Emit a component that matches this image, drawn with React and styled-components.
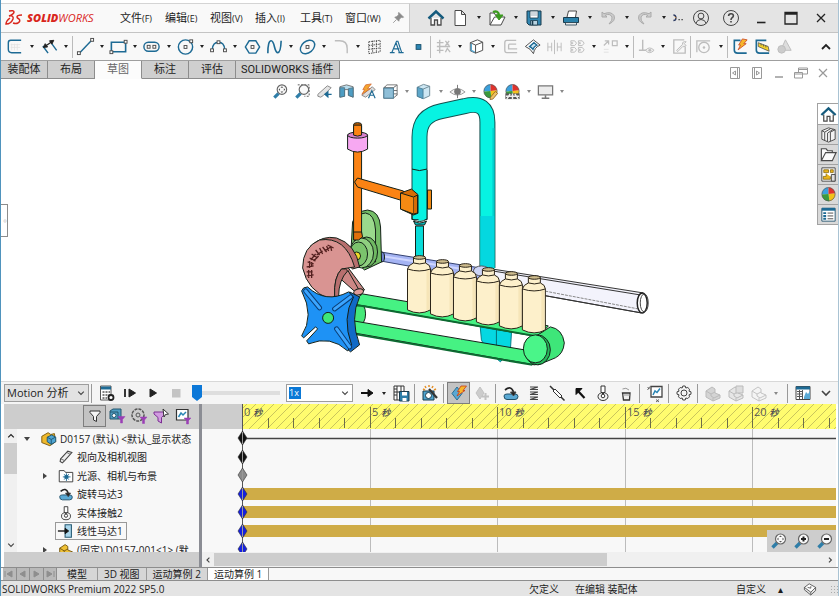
import React from 'react'
import styled, { createGlobalStyle, css } from 'styled-components'

const GlobalStyle = createGlobalStyle`
  * {
    box-sizing: border-box;
  }
  body {
    margin: 0;
    background: #fff;
    color: #1c1c1c;
    font-family: 'Open Sans', 'Noto Sans CJK SC', sans-serif;
    font-size: 11px;
    line-height: 16px;
  }
  button, input, select {
    font: inherit;
    color: inherit;
    margin: 0;
    padding: 0;
    border: none;
    background: none;
  }
`

const Window = styled.div`
  display: flex;
  flex-direction: column;
  min-height: 100vh;
  overflow: hidden;
  border-left: 1px solid #4f93bd;
  border-right: 1px solid #a9c3d3;
  white-space: nowrap;
`

/* ---------- icons ---------- */

const B = '#1d6a94'
const G = '#bdbdbd'
const D = '#4a4a4a'

const dot = (x, y, c = D) => (
  <rect x={x - 1.5} y={y - 1.5} width="3" height="3" fill="#fff" stroke={c} strokeWidth="1" />
)
const ball = (
  <g stroke="none">
    <path d="M10 9.500V2.500A7 7 0 0 0 3 10Z" fill="#3aa0dc" />
    <path d="M10 9.500V2.500A7 7 0 0 1 17 9Z" fill="#e0322c" />
    <path d="M10 9.500L17 9A7 7 0 0 1 11 17Z" fill="#f2c21b" />
    <path d="M10 9.500L11 17A7 7 0 0 1 3 10Z" fill="#3a9a3c" />
    <circle cx="10" cy="9.700" r="7" fill="none" stroke="#555" strokeWidth=".7" />
  </g>
)
const lens = (
  <>
    <path d="M8 12L3.500 16.500" stroke="#2f7ea8" strokeWidth="3.400" />
    <circle cx="11.500" cy="8" r="5" fill="#fafafa" stroke="#666" strokeWidth="1.200" />
  </>
)
const part = (c, c2) => (
  <>
    <path d="M3 8L9 4L12 6V10L17 12V15L10 18L3 14Z" fill={c} stroke={c2} />
    <path d="M3 8L8 11V13L11 15L17 12M8 11L12 9M10 18V15" stroke={c2} />
  </>
)

const icons = {
  home: (
    <>
      <path d="M5 10V17H8.500V12H11.500V17H15V10" fill="#fff" stroke={D} strokeWidth="1.300" />
      <path d="M2.500 10.500L10 3.500L17.500 10.500" stroke="#155b7d" strokeWidth="2.400" />
    </>
  ),
  doc: <path d="M5 2.500H11.500L15.500 6.500V17.500H5ZM11.500 2.500V6.500H15.500" fill="#fff" stroke={D} />,
  open: (
    <>
      <path d="M3 17V5H7L8.500 7H11M3 17L7.500 9H18L14 17Z" fill="#fff" stroke={D} />
      <path d="M6 4Q11 2 12 7" stroke="#3b9a1e" strokeWidth="2.400" />
      <path d="M8.500 7H16L12 12Z" fill="#3b9a1e" stroke="#3b9a1e" />
    </>
  ),
  save: (
    <>
      <path d="M3 3H17V17H5L3 15Z" fill="#3186b1" stroke="#193b4d" />
      <path d="M6 3H14V10H6Z" fill="#fff" stroke="#193b4d" strokeWidth=".8" />
      <path d="M7 5H13M7 7H13" stroke="#89a" strokeWidth=".8" />
      <path d="M6.500 12.500H13.500V17H6.500Z" fill="#b9d3e0" stroke="#193b4d" strokeWidth=".8" />
      <path d="M8.500 13V17" stroke="#193b4d" strokeWidth="1.600" />
    </>
  ),
  print: (
    <>
      <path d="M6 9L7.500 3H15.500L14.500 9" fill="#fff" stroke={D} />
      <path d="M2.500 9.500H17.500V14.500H2.500Z" fill="#2b82ab" stroke="#193b4d" />
      <path d="M4.500 14.500H15.500V17H4.500Z" fill="#e9e9e9" stroke="#193b4d" strokeWidth=".8" />
    </>
  ),
  undo: <path d="M4 4V9H9L7.300 7.300Q12 5 14 9Q15 12 11 16Q18 13 16 7.500Q13 3 6 5.700Z" fill="#ccc" stroke="#aaa" />,
  redo: <path d="M16 4V9H11L12.700 7.300Q8 5 6 9Q5 12 9 16Q2 13 4 7.500Q7 3 14 5.700Z" fill="#ccc" stroke="#aaa" />,
  more: (
    <>
      <path d="M4 7Q7 7 7 10.500Q7 13.500 4 13.500" stroke="#2d3c63" strokeWidth="1.600" />
      <path d="M5.500 9L7.500 11" stroke="#e7902b" />
      <path d="M10 12.500H11.500M13.500 12.500H15" stroke="#333" strokeWidth="1.400" />
    </>
  ),
  user: (
    <>
      <circle cx="10" cy="10" r="7.500" />
      <circle cx="10" cy="8" r="2.900" />
      <path d="M4.800 15.500Q6 11.500 10 11.500Q14 11.500 15.200 15.500" />
    </>
  ),
  help: (
    <>
      <circle cx="10" cy="10" r="7.500" />
      <path d="M7.600 8Q7.600 5.700 10 5.700Q12.400 5.700 12.400 7.800Q12.400 9 11 9.800Q10 10.500 10 12M10 13V14.600" strokeWidth="1.600" />
    </>
  ),
  min: <path d="M6 14.500H14.500" stroke="#222" strokeWidth="1.600" />,
  max: <path d="M4 4.500H16V16H4ZM4 6H16" stroke="#222" strokeWidth="1.300" />,
  close: <path d="M6 6L14 14M14 6L6 14" stroke="#222" strokeWidth="1.300" />,
  pin: <path d="M11 3L17 9L15.500 9.500L14 9L11.500 12L11 14L6 9L8 8.500L11 6L10.500 4.500ZM8 12L4 16" fill="#8a8a8a" stroke="#8a8a8a" />,
  sketch: (
    <>
      <path d="M7 7V14M10 7V14M13 7V14M6 8H16M6 11H16" stroke="#e2e2e2" strokeWidth=".8" />
      <path d="M17 3.500H6Q3.500 3.500 3.500 6V13Q3.500 16.500 7 16.500H17" stroke={B} strokeWidth="1.500" />
    </>
  ),
  dim: (
    <>
      <path d="M3 9.500L8.500 17M12 6.500L17.500 14" stroke={B} strokeWidth="1.500" />
      <path d="M5 10L12.500 5" stroke="#222" strokeWidth="1.500" />
      <path d="M3.500 11L8 10.500L5.500 7ZM14.500 3.500L10 4L12.500 7.500Z" fill="#222" stroke="#222" />
    </>
  ),
  line: <><path d="M4 16.500L16 4" stroke={B} strokeWidth="1.500" />{dot(3, 17)}{dot(17, 3)}</>,
  rect: <><path d="M2.500 5.500H17.500V15.500H2.500Z" stroke={B} strokeWidth="1.700" />{dot(17.500, 5)}{dot(2.500, 16)}</>,
  slot: <><rect x="2" y="5.500" width="16" height="9.500" rx="4.700" stroke={B} strokeWidth="1.500" />{dot(7, 10.300)}{dot(13, 10.300)}</>,
  circle: <><circle cx="10" cy="10.500" r="7.500" stroke={B} strokeWidth="1.500" />{dot(10, 10.500)}{dot(16, 4.500)}</>,
  arc: <><path d="M3.500 13Q4 5.500 10 5.500Q16 5.500 16.500 13" stroke={B} strokeWidth="1.500" />{dot(10, 5.500)}{dot(3.200, 14)}{dot(16.800, 14)}</>,
  hexagon: <><path d="M6.500 4H13.500L17.500 10.500L13.500 17H6.500L2.500 10.500Z" stroke={B} strokeWidth="1.500" />{dot(10, 10.500)}</>,
  spline: <path d="M3 17Q3 4 6.500 4Q8.500 4 10 10.500Q11.500 16.500 13.500 16.500Q16.500 16.500 17 4" stroke={B} strokeWidth="1.700" />,
  ellipse: <><ellipse cx="10" cy="10.500" rx="8.500" ry="6" transform="rotate(-40 10 10.500)" stroke={B} strokeWidth="1.500" />{dot(10, 10.500)}</>,
  fillet: <path d="M3 4H8M8 4Q16 4 16 12V17" stroke={G} strokeWidth="1.500" />,
  plane: <path d="M4 5L16 3.500V15.500L4 17.500ZM8 4V17M12 4V16M4 9L16 7.500M4 13L16 11.500" stroke="#444" strokeDasharray="1.500 1" />,
  text: <path d="M3 16.500H8M12 16.500H17.500M5 16.500L10 4.500H11.500L15.500 16.500M7.500 12.500H13M9.500 6L13 16" stroke={B} strokeWidth="1.200" />,
  point: <rect x="7.500" y="8" width="5" height="5" fill="#2c86b4" stroke="#164f6c" />,
  trim: <path d="M3 6H10M3 10H17M3 14H10M6 3V17M12 4L16 9M16 4L12 9M12 16L14 12L17 16" stroke={G} strokeWidth="1.400" />,
  box: (
    <>
      <path d="M3.500 6L11 3L16.500 5.500V14L9 17L3.500 14.500Z" fill="#fff" stroke={D} />
      <path d="M3.500 6L9 8.500L16.500 5.500M9 8.500V17" stroke={D} />
      <path d="M4.500 7V14L8 16" stroke="#58a7d0" strokeWidth="1.500" />
    </>
  ),
  offset: <path d="M16 3.500H6Q4 3.500 4 6V14Q4 16.500 6 16.500H17M16 7.500H9Q8 7.500 8 9V12.500H17" stroke={G} strokeWidth="1.400" />,
  surface: (
    <>
      <path d="M2.500 10L11 3L18 8.500Q12 11 11 17.500Q8 12 2.500 10Z" stroke={D} fill="#fff" />
      <path d="M7 10L11.500 6L14.500 8.500Q11.500 10 10.500 13Q9 11 7 10Z" fill="#cfe7f4" stroke={B} strokeWidth="1.500" />
    </>
  ),
  mirror: <path d="M10 3V18M3 6V15M7 6V15M3 10.500H7M17 6V15M13 6V15M13 10.500H17" stroke={G} />,
  pattern: <path d="M3 4H7L9 6.500L7 9H3V7H5V6H3ZM11 4H15L17 6.500L15 9H11V7H13V6H11ZM3 11H7L9 13.500L7 16H3V14H5V13H3ZM11 11H15L17 13.500L15 16H11V14H13V13H11Z" stroke={G} />,
  move: <><path d="M3 9L8 4M4 4H8V8M12 4H17V9H12Z" stroke={G} strokeWidth="1.300" /><path d="M3 13H8M3 16H8" stroke="#e2e2e2" /></>,
  relation: <><path d="M6 3V14M2 14H10" stroke={G} strokeWidth="1.500" /><path d="M9 14Q13 9 18 14Q13 19 9 14Z" fill="#eee" stroke={G} /><circle cx="13.500" cy="14" r="1.500" fill={G} stroke="none" /></>,
  repair: <><path d="M15 3H4V17H16V10" stroke={G} strokeWidth="1.400" /><path d="M7 14L13 8Q13 4 17 5L15 7L17 9Q14 11 13.500 10L8 15.500Z" fill="#eee" stroke={G} /></>,
  snap: <><path d="M3 16V4H17" stroke={G} strokeWidth="1.400" /><circle cx="10.500" cy="11" r="5.500" stroke={G} strokeWidth="1.400" /><circle cx="10.500" cy="11" r="1.300" fill={G} stroke="none" /></>,
  rapid: (
    <>
      <path d="M10 3.500H3.500V14Q3.500 17 7 17H16.500" stroke={B} strokeWidth="1.700" />
      <path d="M12 2L17 3L13.500 7H16L7.500 13.500L10 8.500H8Z" fill="#f6b72c" stroke="#c63a1b" strokeWidth=".8" />
    </>
  ),
  instant: (
    <>
      <path d="M14 3.500H3.500V14Q3.500 17 7 17H17" stroke={B} strokeWidth="1.700" />
      <path d="M5.500 6L16 10L17 15L5.500 10Z" fill="#f3d12c" stroke={D} strokeWidth=".8" />
      <path d="M8.500 7V9M11 8V10M13.500 9V11" stroke={D} strokeWidth=".8" />
    </>
  ),
  shaded: <><path d="M11 3L17 14H6Z" fill="#ddd" stroke={G} /><circle cx="7" cy="13" r="4" fill="#ccc" stroke={G} /></>,
  up: <path d="M6 12L10 8L14 12" stroke="#222" strokeWidth="1.800" />,
  down: <path d="M6 8L10 12L14 8" stroke="#444" strokeWidth="1.600" />,
  left: <path d="M12 6.500L8.500 10L12 13.500" stroke="#444" strokeWidth="1.600" />,
  right: <path d="M8.500 6.500L12 10L8.500 13.500" stroke="#444" strokeWidth="1.600" />,
  dockLeft: <path d="M5.500 4.500H14.500V15.500H5.500ZM10.500 8L7.500 10L10.500 12ZM12.500 5V15" stroke="#999" />,
  dockRight: <path d="M5.500 4.500H14.500V15.500H5.500ZM9.500 8L12.500 10L9.500 12ZM7.500 5V15" stroke="#999" />,
  docMin: <path d="M6 14H14" stroke="#999" strokeWidth="1.500" />,
  restore: <path d="M3.500 9.500H11.500V15H3.500ZM7.500 9V5H16.500V11H12M7.500 6.500H16M4 11H11" stroke="#999" />,
  docClose: <path d="M6 6L14 14M14 6L6 14" stroke="#999" strokeWidth="1.200" />,
  zoomFit: <>{lens}<path d="M11.500 4.500L10 6H13ZM11.500 11.500L10 10H13ZM8 8L9.500 6.500V9.500ZM15 8L13.500 6.500V9.500Z" fill="#555" stroke="none" /></>,
  zoomArea: <><path d="M5 3H17V15H12" stroke="#555" strokeDasharray="2 1.500" />{lens}</>,
  zoomIn: <>{lens}<path d="M11.500 5.500V10.500M9 8H14" stroke="#222" strokeWidth="2" /></>,
  zoomOut: <>{lens}<path d="M9 8H14" stroke="#222" strokeWidth="2" /></>,
  prev: (
    <>
      <path d="M3 13L13 4L17 6L9 14L6 16L3 15Z" fill="#e4e4e4" stroke="#888" />
      <path d="M17.500 13H11M13.500 10.500L10.500 13L13.500 15.500Z" fill={B} stroke={B} strokeWidth="1.400" />
    </>
  ),
  section: (
    <>
      <path d="M3 5L10 3L17 5V16L12 14V8L8 8V15L3 16Z" fill="#b8dcec" stroke="#777" />
      <path d="M3 6H8V15L3 16ZM12 7L17 6V16L12 14Z" fill="#4e9dc3" stroke="#4b6c7c" strokeWidth=".8" />
    </>
  ),
  dynamic: (
    <>
      <path d="M3 14L14 5L17 8L7 16Z" fill="#ddd" stroke="#888" />
      <path d="M7 3L13 2L9 7H12L3 13L6 8H4Z" fill="#f4a62f" stroke="#cf5a26" strokeWidth=".7" />
      <path d="M10 17L13.500 9L17 17M11.500 14H16" stroke={B} strokeWidth="1.200" />
    </>
  ),
  orient: (
    <>
      <path d="M6 3H17V14" stroke="#777" />
      <path d="M3 6L6 3.500M3 6H13V17H3ZM13 6L16.500 3.500M13 17L17 13.500M13 9H17M13 12.500H17" fill="none" stroke="#666" />
      <rect x="3" y="6.500" width="10" height="10.500" fill="#8fbfd8" stroke="#4d7f99" />
    </>
  ),
  display: (
    <>
      <path d="M3.500 5.500L10 2.500L16.500 4.500V14.500L10 17.500L3.500 15Z" fill="#cde7f3" stroke="#6f8a97" />
      <path d="M3.500 5.500L9.500 7.500V17.500L3.500 15Z" fill="#5da6c9" stroke="#4a7f99" />
      <path d="M9.500 7.500L16.500 4.500" stroke="#6f8a97" />
    </>
  ),
  eye: (
    <>
      <path d="M2 10.500Q10 3.500 18 10.500Q10 17 2 10.500Z" fill="#f4f4f4" stroke="#999" />
      <circle cx="10" cy="10" r="3.500" fill="#777" stroke="none" />
      <path d="M10 3V17" stroke="#777" />
    </>
  ),
  appearance: <>{ball}<path d="M10 16L15 10L17.500 12L12.500 18L9.500 18.500Z" fill="#edc268" stroke="#8a5e1d" strokeWidth=".8" /></>,
  scene: <>{ball}<path d="M2.500 12H17.500V18H2.500Z" fill="#555" stroke="none" /><path d="M4 18L7.500 12.500M16 18L12.500 12.500M10 12V18M3 15H17" stroke="#eee" strokeWidth="1.500" /></>,
  monitor: <><path d="M2.500 4H17.500V13.500H2.500Z" fill="#ececec" stroke="#777" strokeWidth="1.300" /><path d="M10 14V16.500M6 17H14" stroke="#777" strokeWidth="1.600" /></>,
  library: <path d="M3 6L10 3L17 5V15L10 18L3 15ZM3 6L6 7.500M6 7.500V16.500M6 7.500L12 4M9 8.500V17.500M9 8.500L15 4.500M12 7.500V17M12 7.500L17 5" fill="#f3f3f3" stroke={D} />,
  folder: <path d="M2.500 16.500V4H7.500L9 6H14V8M2.500 16.500L7 8H18L14 16.500Z" fill="#fafafa" stroke={D} strokeWidth="1.200" />,
  palette: (
    <>
      <path d="M3 3H17V17H3Z" fill="#fff" stroke={D} />
      <path d="M5 5H10V8H5ZM12 5H15V8H12ZM7.500 9V12H4.500V15H12V12" fill="#eab61a" stroke="#81620b" strokeWidth=".8" />
      <path d="M13 10H17V17H13Z" fill="#ddd" stroke={D} />
    </>
  ),
  ball,
  props: (
    <>
      <path d="M3 3.500H17V17H3Z" fill="#fff" stroke="#2b5a73" />
      <path d="M3 4.500H17" stroke={B} strokeWidth="3" />
      <path d="M4.500 8.500H7.500M4.500 11.500H7.500M4.500 14.500H7.500" stroke={B} strokeWidth="2" />
      <path d="M9 8.500H15M9 11.500H15M9 14.500H15" stroke={D} />
    </>
  ),
  calc: (
    <>
      <path d="M3.500 3H14V17H3.500Z" fill="#fff" stroke="#555" />
      <path d="M4 5H14" stroke={B} strokeWidth="3" />
      <path d="M5.500 9H13M5.500 12H13M5.500 15H10" stroke="#555" strokeWidth="1.700" strokeDasharray="2 1" />
      <circle cx="14" cy="14.500" r="2.500" stroke="#222" strokeWidth="1.800" fill="#fff" />
    </>
  ),
  playStart: <><path d="M5 6V14" stroke="#222" strokeWidth="1.800" /><path d="M9 6V14L15.500 10Z" fill="#222" stroke="#222" /></>,
  play: <path d="M7 6V14L13.500 10Z" fill="#222" stroke="#222" />,
  stop: <rect x="6" y="6" width="8.500" height="8.500" fill="#c4c4c4" stroke="none" />,
  arrow: <><path d="M4 10H12" stroke="#111" strokeWidth="2" /><path d="M11 6.500L16 10L11 13.500Z" fill="#111" stroke="#111" /></>,
  movie: (
    <>
      <path d="M3 3H13V17H3ZM6 3V17M10 3V17M3 6H6M3 9H6M3 12H6M6 9H13" fill="#fff" stroke="#333" />
      <path d="M8.500 8.500H18V18H8.500Z" fill="#2e7ea9" stroke="#193b4d" />
      <path d="M11 9H16V12.500H11Z" fill="#fff" stroke="none" />
      <path d="M11.500 15H15.500V18H11.500Z" fill="#fff" stroke="none" />
    </>
  ),
  camera: (
    <>
      <path d="M3 8H14V17H3Z" fill="#4ea4d0" stroke="#193b4d" />
      <circle cx="8.500" cy="12.500" r="3" fill="#fff" stroke="#193b4d" />
      <path d="M9 6L17 15" stroke="#333" strokeWidth="2.200" />
      <path d="M5 3L6 5M9 2V4M13 3L12 5M16 6L14 7M3 6L5 7" stroke="#e4902a" strokeWidth="1.500" />
    </>
  ),
  keyPlace: (
    <>
      <path d="M8 4L13 10.500L8 17L3 10.500Z" fill="#5aa9d4" stroke="#2b6f93" />
      <path d="M12 3L17.500 3L14 7.500H16L8 13L10.500 8.500H8.500Z" fill="#f6b72c" stroke="#c63a1b" strokeWidth=".8" />
    </>
  ),
  keyAdd: <><path d="M8 4L12 10L8 16L4 10Z" fill="#ccc" stroke="#c2c2c2" /><path d="M13.500 10V17M10 13.500H17" stroke="#c2c2c2" strokeWidth="2" /></>,
  motor: (
    <>
      <path d="M3 13Q3 11 6 11H14Q17 11 17 13.500Q17 16.500 14 16.500H6Q3 16.500 3 13Z" fill="#5aa9d4" stroke="#204e66" />
      <path d="M4 7Q10 2 12.500 9" stroke="#222" strokeWidth="1.700" />
      <path d="M9.500 9H15L12.500 13Z" fill="#222" />
    </>
  ),
  spring: <path d="M6 4H14M6 6.500H14M6 9H14M6 11.500H14M6 14H14M6 16.500H14M14 4L6 6.500M14 9L6 11.500M14 14L6 16.500" stroke="#444" strokeWidth="1.200" />,
  damper: <><path d="M3 3L8 8M12 12L17.500 17.500" stroke="#333" strokeWidth="1.500" /><path d="M6 8L8 6L15 13L13 15Z" fill="#fff" stroke="#333" /></>,
  force: <><path d="M14.500 15L8 8" stroke="#111" strokeWidth="2.200" /><path d="M6 5.500H12L6 11.500Z" fill="#111" stroke="#111" /></>,
  contact: (
    <>
      <path d="M8 3H12V9L10 11L8 9Z" fill="#fff" stroke="#333" />
      <ellipse cx="10" cy="13.500" rx="5" ry="4" stroke="#333" />
      <circle cx="10" cy="13" r="1.800" fill="#fff" stroke="#333" />
    </>
  ),
  gravity: <><path d="M6.500 10H14L13.500 17H7.500Z" fill="#eee" stroke="#333" strokeWidth="1.300" /><path d="M6.500 6Q10 4 13 7M6.500 12H14" stroke="#999" /></>,
  plot: (
    <>
      <path d="M6 3.500H17V14H6Z" fill="#fff" stroke="#444" strokeWidth="1.300" />
      <path d="M8 12L10 8L12 9.500L15 5.500" stroke="#2b86b5" strokeWidth="1.500" />
      <path d="M2.500 4L4.500 6M2.500 7L5 3.500M11 16.500L14 19M14 16.500L11 19" stroke="#444" strokeWidth=".8" />
    </>
  ),
  gear: (
    <>
      <path d="M8.800 3H11.200L11.800 5L13.800 4.500L15.500 6.200L15 8.200L17 8.800V11.200L15 11.800L15.500 13.800L13.800 15.500L11.800 15L11.200 17H8.800L8.200 15L6.200 15.500L4.500 13.800L5 11.800L3 11.200V8.800L5 8.200L4.500 6.200L6.200 4.500L8.200 5Z" stroke="#444" />
      <circle cx="10" cy="10" r="3" stroke="#444" />
    </>
  ),
  partGrey: part('#d4d4d4', '#bbb'),
  partLight: <>{part('#e6e6e6', '#bbb')}<path d="M10 3H17V10H10Z" fill="#ddd" stroke="#bbb" /></>,
  partLine: part('#f4f4f4', '#c4c4c4'),
  table: (
    <>
      <path d="M3 3.500H17V16.500H3Z" fill="#fff" stroke="#444" />
      <path d="M3 5H17" stroke={B} strokeWidth="3" />
      <path d="M4 8.500H9M4 11H9M4 13.500H9M6.500 7V16M9.500 7V16" stroke="#555" />
      <path d="M11 14L13 9L15 11L17 8V16H11Z" fill="#5aa9d4" stroke="none" />
    </>
  ),
  funnel: <path d="M5 5H15V6.500L11.500 10.500V15.500L8.500 14V10.500L5 6.500Z" fill="#f4f4f4" stroke="#333" />,
  filterAnim: <><path d="M3 5L6 3H14V13H3ZM3 6H11V13" fill="#4e9dc3" stroke="#24566e" /><circle cx="7" cy="9.500" r="2" fill="#fff" stroke="#24566e" /><path d="M11 10.500H18L15.500 13.500V17H13.500V13.500Z" fill="#9a3fb5" stroke="#9a3fb5" strokeWidth=".5" /></>,
  filterDrive: <><circle cx="9" cy="9" r="6" stroke="#555" strokeDasharray="3 1" strokeWidth="1.500" /><circle cx="9" cy="9" r="2" stroke="#555" /><path d="M11 11H18L15.500 14V17.500H13.500V14Z" fill="#9a3fb5" stroke="#9a3fb5" strokeWidth=".5" /></>,
  filterSel: <><path d="M3 6H14V8L10.500 11.500V17L7 15V11.500L3 8Z" fill="#d19be0" stroke="#7c2e93" /><path d="M12 3L17.500 8L14.500 8.500L13 11Z" fill="#fff" stroke="#333" /></>,
  filterRes: <><path d="M3.500 3.500H15V14H3.500Z" fill="#fff" stroke="#333" strokeWidth="1.200" /><path d="M5.500 11L8 7L10 9L13 6" stroke="#2b86b5" strokeWidth="1.500" /><path d="M11 12H18L15.500 14.500V18H13.500V14.500Z" fill="#9a3fb5" stroke="#9a3fb5" strokeWidth=".5" /></>,
  assembly: (
    <>
      <path d="M2 7L9 3L12 5L16 4L17.500 13L11 17.500L2 14Z" fill="#efb92c" stroke="#775508" />
      <path d="M8 8L13 5.500L17.500 8V13L12.500 16L8 13Z" fill="#4fa5d2" stroke="#1c536f" />
      <path d="M8 8L12.500 10.500L17 8M12.500 10.500V16" stroke="#1c536f" />
    </>
  ),
  viewCam: <><path d="M4 12L12 3.500L16.500 5L8.500 14L6 16.500L3.500 15Z" fill="#eee" stroke="#444" strokeWidth="1.200" /><path d="M4 12L8.500 14M11 5L14.500 7" stroke="#666" /></>,
  lights: (
    <>
      <path d="M2.500 16.500V4H8L9.500 6H17.500V16.500Z" fill="#fff" stroke="#333" />
      <circle cx="10.500" cy="11" r="2" fill={B} stroke={B} />
      <path d="M10.500 7V9M10.500 13V15.500M6.500 11H8.500M12.500 11H15M8 8L9 9.500M13 8L12 9.500M8 14L9 12.500M13 14L12 12.500" stroke={B} />
    </>
  ),
  linear: <><path d="M9 3H16V17H9Z" fill="#a9d6ec" stroke="#285c74" strokeWidth="1.200" /><path d="M1 10H9" stroke="#111" strokeWidth="1.500" /><path d="M9 7L13 10L9 13Z" fill="#111" stroke="#111" /></>,
  partGold: part('#efc136', '#73540c'),
  tag: <><path d="M3 8L9 3.500L17 8L11 14Z" fill="#fff" stroke="#444" /><path d="M3 8V11L11 17.500L17 12V8M11 14V17" stroke="#444" /><path d="M7 8L11 9L11 6.500" stroke="#444" /></>,
}

const Svg = styled.svg`
  display: block;
  flex: none;
  width: ${p => p.$size}px;
  height: ${p => p.$size}px;
  overflow: visible;
`

const Icon = ({ name, size = 20 }) => (
  <Svg $size={size} viewBox="0 0 20 20" fill="none" stroke="#444" aria-hidden="true">
    {icons[name]}
  </Svg>
)

const Tool = styled.button`
  display: flex;
  align-items: center;
  justify-content: center;
  flex: ${p => (p.$grow ? '22 1 0' : 'none')};
  min-width: 0;
  width: ${p => p.$w || 22}px;
  height: 22px;
  overflow: visible;
  ${p =>
    p.$on &&
    css`
      background: #c3c3c3;
      border: 1px solid #7d7d7d;
    `}
`

const DropButton = styled.button`
  display: flex;
  align-items: center;
  justify-content: center;
  flex: ${p => (p.$grow ? '11 1 0' : 'none')};
  min-width: 0;
  width: ${p => p.$w || 11}px;
  height: 22px;
  &::after {
    content: '';
    border: 2px solid transparent;
    border-top: 3px solid ${p => (p.$dim ? '#888' : '#222')};
    border-bottom: 0;
  }
`

// "name" is an icon, "name+" an icon with a drop-down arrow
const Tools = ({ items, grow, w, arrow, dim }) =>
  items.map(item => {
    const name = item.replace('+', '')
    return (
      <React.Fragment key={name}>
        <Tool $grow={grow} $w={w} aria-label={name}>
          <Icon name={name} size={grow ? 19 : 20} />
        </Tool>
        {item.endsWith('+') && <DropButton $grow={grow} $w={arrow} $dim={dim} aria-label={name + ' menu'} />}
      </React.Fragment>
    )
  })

/* ---------- title bar ---------- */

const TitleBar = styled.header`
  display: flex;
  height: 33px;
  border-top: 3px solid #fff;
  border-bottom: 1px solid #c4c4c4;
  background: #e4e4e4;
  box-shadow: inset 0 1px 0 #d4d4d4;
`

const MenuArea = styled.div`
  display: flex;
  align-items: center;
  width: 409px;
  padding-left: 4px;
  background: #f9f9f9;
  border-right: 1px solid #c9c9c9;
  border-top: 1px solid #d4d4d4;
`

const Brand = styled.div`
  display: flex;
  align-items: center;
  gap: 4px;
  width: 107px;
  color: #d9261c;
  font-family: 'Open Sans', sans-serif;
  font-style: italic;
  font-size: 11px;
  b {
    font-weight: 800;
  }
`

const Menu = styled.nav`
  display: flex;
  flex: 1;
`

const MenuItem = styled.button`
  width: 45px;
  padding-left: 8px;
  text-align: left;
  small {
    font-size: 9px;
  }
`

const QuickBar = styled.div`
  display: flex;
  align-items: center;
  flex: 1;
  padding-left: 14px;
`

const WindowButtons = styled.div`
  display: flex;
  margin-left: auto;
  padding-right: 2px;
`

/* ---------- sketch ribbon ---------- */

const Ribbon = styled.div`
  display: flex;
  align-items: center;
  height: 28px;
  padding: 0 1px 0 2px;
  background: #f8f8f8;
  border-bottom: 1px solid #9f9f9f;
`

const Group = styled.div`
  display: flex;
  align-items: center;
  width: ${p => p.$w}px;
  height: 22px;
  & + & {
    border-left: 1px solid #bbb;
    padding-left: 1px;
  }
`

const Spacer = styled.div`
  flex: 1;
`

const TabRow = styled.div`
  display: flex;
  align-items: flex-start;
  height: 18px;
`

const Tab = styled.button`
  min-width: 47px;
  height: 18px;
  padding: 0 5px;
  font-family: Roboto, 'Noto Sans CJK SC', sans-serif;
  background: ${p => (p.$active ? '#fcfcfc' : '#cfcfcf')};
  color: ${p => (p.$active ? '#666' : '#222')};
  border-right: 1px solid #8d8d8d;
  border-bottom: 1px solid ${p => (p.$active ? '#fcfcfc' : '#8d8d8d')};
`

const DocButtons = styled.div`
  display: flex;
  margin-left: auto;
  padding: 1px 4px 0 0;
`

/* ---------- graphics area ---------- */

const Viewport = styled.main`
  position: relative;
  display: flex;
  flex: 1;
  min-height: 302px;
`

const Scene = styled.svg`
  display: block;
  flex: 1;
  min-width: 0;
`

const HeadsUp = styled.div`
  position: absolute;
  top: 1px;
  left: 0;
  right: 2px;
  display: flex;
  justify-content: center;
`

const HeadsUpTools = styled.div`
  display: flex;
  width: 299px;
`

const TaskPane = styled.aside`
  position: absolute;
  top: 24px;
  right: 0;
  width: 21px;
  border: 1px solid #a2a2a2;
  border-right: none;
`

const PaneTab = styled.button`
  display: flex;
  align-items: center;
  justify-content: center;
  width: 100%;
  height: 20px;
  background: ${p => (p.$active ? '#fff' : '#d9d9d9')};
  & + & {
    border-top: 1px solid #a2a2a2;
  }
`

const PanelHandle = styled.button`
  position: absolute;
  top: 125px;
  left: 0;
  width: 7px;
  height: 33px;
  border: 1px solid #8c8c8c;
  border-left: none;
  background: #fff;
  font-size: 8px;
  color: #777;
`

const Bottle = ({ x, y }) => (
  <g transform={`translate(${x} ${y})`} fill="#fdf0cb" stroke="#2b2418" strokeWidth="1">
    <path d="M0 13Q1 9 6 7V2Q12 -1 18 2V7Q23 9 23 13V54Q12 60 0 54Z" />
    <path d="M19 15V55L22 53V13Z" fill="#f6e5b8" stroke="none" />
    <ellipse cx="12" cy="1.500" rx="6" ry="1.800" fill="#cdbb8c" />
    <path d="M6 7Q12 9 18 7M0 13Q12 17 23 13" fill="none" />
  </g>
)

const slots = ['M305 291L319 308', 'M350 297L334 309', 'M336 329L349 347']

const Model = () => (
  <Scene viewBox="0 79 838 302" preserveAspectRatio="xMidYMid meet" stroke="#142018" strokeWidth="1" fill="none" role="img" aria-label="D0157">
    {/* transfer shaft and guide tube */}
    <path d="M479 267L643 293Q648 303 643 313L479 284Z" fill="#f3f3fc" stroke="none" />
    <path d="M479 267L643 293M486 270L640 295M479 284L641 313" stroke="#333" />
    <path d="M486 280L638 309" stroke="#888" strokeDasharray="3 1" />
    <path d="M479 284L641 313" stroke="#333" />
    <ellipse cx="642" cy="303" rx="5" ry="10" fill="#fff" stroke="#222" strokeWidth="1.500" />
    <ellipse cx="644" cy="303" rx="4" ry="9" stroke="#444" />
    <path d="M380 252L480 268V279L380 261Q375 257 380 252Z" fill="#a4b3f3" stroke="#33406f" />
    <path d="M381 256L480 272" stroke="#cfd6ff" strokeWidth="2" />
    <ellipse cx="381" cy="257" rx="3" ry="5" fill="#6f83cf" />

    {/* frame pipe */}
    <path d="M479 318H512L510 350L500 362L486 350L481 340Z" fill="#05d8e2" stroke="#057e88" />
    <path d="M496 320V350" stroke="#056d75" />
    <path d="M419 220V137C419 122 426 114 441 111L464 106C480 102 487 108 487 122V268" stroke="#14504f" strokeWidth="16" />
    <path d="M419 219V137C419 122 426 114 441 111L464 106C480 102 487 108 487 122V270" stroke="#07f3e2" strokeWidth="14" />
    <path d="M493 128V216" stroke="#03cfd0" strokeWidth="2" />
    <path d="M487 216V268" stroke="#04d8e0" strokeWidth="14" />
    <ellipse cx="481" cy="271" rx="8" ry="5" fill="#ccd4f6" stroke="#555" />

    {/* slide rod, collar and arm */}
    <path d="M427 190H431V209H427Z" fill="#f48a13" />
    <path d="M350 258L352 222Q356 211 367 210Q379 211 380 227L381 262L364 270Z" fill="#73bd66" />
    <path d="M354 258V224Q357 213 365 213Q374 214 375 230V262Z" fill="#9ad98c" />
    <path d="M353 126H361V239L358 243L353 239Z" fill="#fb8314" />
    <ellipse cx="357" cy="124.500" rx="4" ry="2" fill="#c75e00" />
    <path d="M347 135V149Q357 155 367 149V135Z" fill="#f7a8f2" />
    <ellipse cx="357" cy="135" rx="10" ry="3" fill="#d881d0" />
    <path d="M353 125H361V135Q357 137 353 135Z" fill="#fb8314" />
    <path d="M357 178L403 191V201L357 187L354 182Z" fill="#fb8314" />
    <path d="M400 193L411 189L418 195V213L413 215L400 209Z" fill="#d66c05" />
    <path d="M400 193L413 197V214L400 209Z" fill="#f48a13" />
    <path d="M413 197L417 195V213L413 214" fill="#d66c05" />
    <path d="M418 170H426.500V219Q422 221 418 221Z" fill="#07f3e2" stroke="none" />
    <path d="M426.500 170V219Q419 224 411.500 219V214" />
    <path d="M413 221Q419 225 426 221L424 225H415Z" fill="#06bfc4" />
    <path d="M415 226V258H423V226Z" fill="#08dcd9" />
    <path d="M411.500 169Q419 172 426.500 169" />

    {/* cam discs */}
    <ellipse cx="366" cy="252" rx="11" ry="15" fill="#6fb862" />
    <ellipse cx="361" cy="253" rx="12" ry="15" fill="#8fcf80" />
    <ellipse cx="358" cy="254" rx="9" ry="12" fill="#7bc36d" />
    <circle cx="356" cy="256" r="4" fill="#f1db2b" />
    <path d="M353 232H361L362 237L358 240H353Z" fill="#e06f0a" />

    {/* conveyor belt */}
    <ellipse cx="358" cy="314" rx="7" ry="12" fill="#45e878" />
    <path d="M352 301L362 294L548 326L538 337L352 304Z" fill="#46f283" />
    <path d="M352 305L362 306L540 337" stroke="#0c6a31" strokeWidth="2" />
    <path d="M353 321L530 351L540 364L534 365L353 333Z" fill="#46f283" />
    <path d="M353 334L532 365" stroke="#0c6a31" strokeWidth="2" />
    <path d="M536 336L550 327Q562 329 564 343Q563 354 555 358L538 365Z" fill="#3ee679" />
    <ellipse cx="537" cy="350" rx="13" ry="15" fill="#25b65a" />
    <ellipse cx="535" cy="349" rx="12" ry="14" fill="#4af589" />

    {[0, 1, 2, 3, 4, 5].map(i => (
      <Bottle key={i} x={407 + i * 23} y={256 + i * 4} />
    ))}

    {/* driver wheel */}
    <path d="M310 246Q322 235 336 238Q355 244 359 267L352 269L328 248Z" fill="#b76f6e" />
    <path d="M341 270L347 267L364 290L357 294L340 279Z" fill="#cc8785" />
    <path d="M347 270L359 291" />
    <ellipse cx="358" cy="292" rx="5" ry="3" transform="rotate(-15 358 292)" fill="#e29b98" />
    <path d="M329 299Q307 291 302 268Q302 247 319 240Q345 236 354 267L341 269Q333 277 334 297Z" fill="#d99492" />
    <path d="M341 269Q346 268 347 271Q338 280 338 297L334 297Q333 277 341 269Z" fill="#b76f6e" />
    <path d="M306 276L313 275M306 272L312 272M308 278V270M311 278V270M306 267L313 266M307 262L313 264M309 268V261M311 267V262M309 258L315 261M311 254L317 258M310 260L315 254M313 261L318 256M315 250L319 255M319 248L322 254M316 255L322 251M322 247L326 252M326 246L328 251M324 251L330 247M330 246L331 251M327 245L333 248" stroke="#53201f" strokeWidth="1.300" />

    {/* geneva wheel */}
    <path d="M349 292L359 297Q349 318 359 345L350 352L340 344Q344 310 349 292Z" fill="#116ac6" />
    <path d="M303 288L307 287Q325 304 348 292L353 297Q341 318 351 345L347 351Q330 335 308 344L306 341L317 329L315 327L303 338L301 336Q314 316 301 291Z" fill="#1e92f5" />
    {slots.map(d => (
      <g key={d} strokeLinecap="round">
        <path d={d} stroke="#0b3d74" strokeWidth="5" />
        <path d={d} stroke="#3ba5ff" strokeWidth="3" />
      </g>
    ))}
    <circle cx="327.500" cy="318" r="5.500" fill="#3ee679" />
  </Scene>
)

/* ---------- motion study ---------- */

const MotionBar = styled.div`
  display: flex;
  align-items: center;
  height: 23px;
  padding: 0 1px 0 3px;
  background: #f5f5f5;
  border-top: 1px solid #d8d8d8;
`

const Combo = styled.div`
  position: relative;
  display: flex;
  align-items: center;
  width: ${p => p.$w}px;
  height: 18px;
  background: ${p => (p.$white ? '#fff' : '#e2e2e2')};
  border: 1px solid #9d9d9d;
  select {
    width: 100%;
    height: 16px;
    padding-left: 2px;
    appearance: none;
    outline: none;
  }
  input {
    width: 12px;
    height: 12px;
    margin-left: 2px;
    font-size: 9px;
    color: #fff;
    background: #0a78d6;
  }
`

const ComboArrow = styled.span`
  position: absolute;
  right: 0;
  pointer-events: none;
`

const Sep = styled.span`
  width: 1px;
  height: 19px;
  margin: 0 3px 0 2px;
  background: #999;
`

const Slider = styled.input`
  appearance: none;
  width: 88px;
  height: 18px;
  margin: 0 6px 0 5px;
  &::-webkit-slider-runnable-track {
    height: 4px;
    background: #dedede;
  }
  &::-webkit-slider-thumb {
    appearance: none;
    width: 10px;
    height: 16px;
    margin-top: -6px;
    background: #0c78d8;
    clip-path: polygon(0 0, 100% 0, 100% 75%, 50% 100%, 0 75%);
  }
`

const PlayMode = styled.div`
  display: flex;
  margin-left: 2px;
`

const Study = styled.section`
  display: flex;
  height: 163px;
  padding-right: 2px;
`

const TreePanel = styled.div`
  width: 198px;
  display: flex;
  flex-direction: column;
`

const FilterBar = styled.div`
  display: flex;
  align-items: flex-start;
  justify-content: flex-end;
  height: 25px;
  margin-left: 3px;
  padding: 1px 5px 0 0;
  background: #cdcdcd;
`

const TreeBody = styled.div`
  display: flex;
  height: 123px;
`

const VScroll = styled.div`
  display: flex;
  flex-direction: column;
  justify-content: space-between;
  align-items: center;
  width: 13px;
  margin-left: 3px;
  background: #f0f0f0;
`

const VThumb = styled.div`
  width: 13px;
  height: 31px;
  margin-bottom: auto;
  background: #cdcdcd;
`

const Tree = styled.ul`
  display: grid;
  grid-auto-rows: 19px 18px;
  flex: 1;
  margin: 0;
  padding: 0;
  overflow: hidden;
  list-style: none;
  font-size: 10px;
  background: #f8f8f8;
`

const Row = styled.li`
  display: flex;
  align-items: center;
  padding-left: ${p => (p.$root ? 2 : 21)}px;
`

const Toggle = styled.span`
  width: ${p => (p.$root ? 19 : 17)}px;
  padding-left: 5px;
  &::after {
    content: '';
    display: ${p => (p.$open === undefined ? 'none' : 'block')};
    width: 0;
    border: 3px solid transparent;
    ${p => (p.$open ? 'border-top: 4px solid #444; border-bottom: 0;' : 'border-left: 4px solid #444; border-right: 0;')}
  }
`

const NodeLabel = styled.span`
  display: flex;
  align-items: center;
  gap: 2px;
  height: 18px;
  padding: 0 3px 0 1px;
  border: 1px solid ${p => (p.$boxed ? '#999' : 'transparent')};
`

const TreeFoot = styled.div`
  height: 15px;
  margin-left: 3px;
  background: #cdcdcd;
`

const Timeline = styled.div`
  position: relative;
  display: flex;
  flex-direction: column;
  flex: 1;
  min-width: 0;
  border-left: 3px solid #8b8d94;
  background: #f8f8f8;
`

const Chart = styled.svg`
  display: block;
  width: 100%;
  height: 148px;
  font-size: 11px;
`

const ZoomTools = styled.div`
  position: absolute;
  right: 0;
  bottom: 15px;
  display: flex;
  background: #cdcdcd;
`

const HScroll = styled.div`
  display: flex;
  align-items: center;
  height: 15px;
  background: #f0f0f0;
`

const HThumb = styled.div`
  width: 62%;
  height: 13px;
  background: #cdcdcd;
`

const ScrollButton = styled.button`
  display: flex;
  justify-content: center;
  align-items: center;
  width: 12px;
  height: 14px;
`

const SCALE = 25.5
const ORIGIN = 40
const seconds = Array.from({ length: 24 }, (_, i) => i)
const keyRows = [
  { y: 34, color: '#111', line: true },
  { y: 53, color: '#111' },
  { y: 71, color: '#8b8b8b' },
  { y: 90, color: '#1520e0', bar: true },
  { y: 108, color: '#1520e0', bar: true },
  { y: 127, color: '#1520e0', bar: true },
  { y: 145, color: '#1520e0' },
]

const TimelineChart = () => (
  <Chart>
    <defs>
      <pattern id="hatch" width="9" height="9" patternUnits="userSpaceOnUse">
        <rect width="9" height="9" fill="#fffc6f" />
        <path d="M-1 10L10 -1" stroke="#c9c55c" strokeWidth="1" />
      </pattern>
    </defs>
    <rect width={ORIGIN} height="25" fill="#cdcdcd" />
    <rect x={ORIGIN} width="100%" height="25" fill="url(#hatch)" />
    {seconds.map(s => {
      const x = Math.round(ORIGIN + s * SCALE)
      const major = s % 5 === 0
      return (
        <g key={s}>
          <path d={`M${x + 0.5} ${major ? 3 : 14}V24`} stroke="#6d6d4a" />
          {major && s > 0 && <path d={`M${x + 0.5} 25V148`} stroke="#bcbcbc" />}
          {major && (
            <text x={x + 2} y="12" fill="#555">
              {s} <tspan fontSize="9" fontWeight="700" fontStyle="italic">秒</tspan>
            </text>
          )}
        </g>
      )
    })}
    {keyRows.map(r => (
      <g key={r.y}>
        {r.line && <path d={`M${ORIGIN} ${r.y + 0.5}H3000`} stroke="#444" strokeWidth="1.500" />}
        {r.bar && <rect x={ORIGIN} y={r.y - 6} width="100%" height="12" fill="#cfac47" />}
      </g>
    ))}
    <path d={`M${ORIGIN + 0.5} 0V148`} stroke="#555" />
    {keyRows.map(r => (
      <g key={r.y}>
        <path d={`M${ORIGIN + 0.5} ${r.y - 7}L${ORIGIN + 5} ${r.y}L${ORIGIN + 0.5} ${r.y + 7}L${ORIGIN - 4} ${r.y}Z`} fill={r.color} stroke="#333" strokeWidth=".6" />
        <path d={`M${ORIGIN + 0.5} ${r.y - 6}V${r.y + 6}`} stroke="#999" />
      </g>
    ))}
  </Chart>
)

const StudyTabs = styled.div`
  display: flex;
  height: 13px;
  border-top: 1px solid #8d8d8d;
  background: #f8f8f8;
  padding-left: 2px;
`

const TabArrows = styled.div`
  display: flex;
  width: 54px;
  background: #b9b9b9;
`

const TabArrow = styled.button`
  display: flex;
  flex: 1;
  align-items: center;
  justify-content: center;
  height: 12px;
  border-right: 1px solid #8e8e8e;
`

const StudyTab = styled.button`
  height: 12px;
  padding: 0 ${p => p.$pad || 6}px;
  line-height: 12px;
  font-size: 10px;
  background: ${p => (p.$active ? '#fff' : '#d6d6d6')};
  border-right: 1px solid #999;
`

const StatusBar = styled.footer`
  display: flex;
  align-items: center;
  height: 17px;
  padding-left: 1px;
  background: #e4e4e4;
  border-top: 1px solid #8d8d8d;
  font-size: 10px;
`

const StatusRight = styled.div`
  display: flex;
  align-items: center;
  width: 309px;
  margin-left: auto;
`

const StatusText = styled.span`
  width: ${p => p.$w}px;
`

const Grip = styled.span`
  width: 8px;
  height: 8px;
  margin-left: auto;
  background: radial-gradient(#aaa 1px, transparent 1px) 0 0 / 3px 3px;
`

const tabArrows = {
  first: 'M1 2V8M8 2V8L3 5Z',
  previous: 'M7 2V8L2 5Z',
  next: 'M3 2V8L8 5Z',
  last: 'M9 2V8M2 2V8L7 5Z',
}

const menus = [
  ['文件', 'F'],
  ['编辑', 'E'],
  ['视图', 'V'],
  ['插入', 'I'],
  ['工具', 'T'],
  ['窗口', 'W'],
]

const ribbonGroups = [
  [69, ['sketch+', 'dim+']],
  [358, ['line+', 'rect+', 'slot+', 'circle+', 'arc+', 'hexagon', 'spline+', 'ellipse+', 'fillet+', 'plane', 'text', 'point']],
  [203, ['trim+', 'box+', 'offset', 'surface', 'mirror', 'pattern+', 'move+']],
  [57, ['relation+', 'repair']],
  [37, ['snap+']],
  [68, ['rapid', 'instant', 'shaded']],
]

const treeRows = [
  { icon: 'assembly', text: 'D0157 (默认) <默认_显示状态', root: true, open: true },
  { icon: 'viewCam', text: '视向及相机视图' },
  { icon: 'lights', text: '光源、相机与布景', open: false },
  { icon: 'motor', text: '旋转马达3' },
  { icon: 'contact', text: '实体接触2' },
  { icon: 'linear', text: '线性马达1', boxed: true },
  { icon: 'partGold', text: '(固定) D0157-001<1> (默', open: false },
]

export default function App() {
  return (
    <Window>
      <GlobalStyle />
      <TitleBar>
        <MenuArea>
          <Brand>
            <svg width="18" height="18" viewBox="0 0 18 18" fill="none" stroke="#d9261c" strokeWidth="1.500">
              <path d="M4 2Q9 1 9 3Q9 5 4 7Q9 6 8 10Q6 15 1 15Q1 12 5 9" />
              <path d="M17 6Q12 6 12 8Q12 9 14 10Q16 12 13 14Q11 15 8 14" />
            </svg>
            <span>
              <b>SOLID</b>WORKS
            </span>
          </Brand>
          <Menu>
            {menus.map(([label, key]) => (
              <MenuItem key={key}>
                {label}
                <small>({key})</small>
              </MenuItem>
            ))}
          </Menu>
          <Tool aria-label="pin">
            <Icon name="pin" size={16} />
          </Tool>
        </MenuArea>
        <QuickBar>
          <Tools items={['home', 'doc+', 'open+', 'save+', 'print+', 'undo+', 'redo+']} w={24} arrow={13} />
          <WindowButtons>
            <Tool $w={15} aria-label="more">
              <Icon name="more" size={17} />
            </Tool>
            <Tools items={['user', 'help', 'min', 'max', 'close']} w={30} />
          </WindowButtons>
        </QuickBar>
      </TitleBar>
      <Ribbon>
        {ribbonGroups.map(([width, items]) => (
          <Group key={items[0]} $w={width}>
            <Tools items={items} grow />
          </Group>
        ))}
        <Spacer />
        <Tool aria-label="collapse">
          <Icon name="up" />
        </Tool>
      </Ribbon>
      <TabRow>
        {['装配体', '布局', '草图', '标注', '评估', 'SOLIDWORKS 插件'].map(t => (
          <Tab key={t} $active={t === '草图'}>
            {t}
          </Tab>
        ))}
        <DocButtons>
          <Tools items={['dockLeft', 'dockRight', 'docMin', 'restore', 'docClose']} />
        </DocButtons>
      </TabRow>

      <Viewport>
        <Model />
        <HeadsUp>
          <HeadsUpTools>
            <Tools
              items={['zoomFit', 'zoomArea', 'prev', 'section', 'dynamic', 'orient+', 'display+', 'eye+', 'appearance', 'scene+', 'monitor+']}
              grow
              dim
            />
          </HeadsUpTools>
        </HeadsUp>
        <PanelHandle aria-label="expand panel">◦</PanelHandle>
        <TaskPane>
          {['home', 'library', 'folder', 'palette', 'ball', 'props'].map((name, i) => (
            <PaneTab key={name} $active={i === 0} aria-label={name}>
              <Icon name={name} size={19} />
            </PaneTab>
          ))}
        </TaskPane>
      </Viewport>

      <MotionBar>
        <Combo $w={85}>
          <select aria-label="study type">
            <option>Motion 分析</option>
          </select>
          <ComboArrow>
            <Icon name="down" size={14} />
          </ComboArrow>
        </Combo>
        <Sep />
        <Tools items={['calc', 'playStart', 'play', 'stop']} w={23} />
        <Slider type="range" min="0" max="100" defaultValue="0" aria-label="time" />
        <Combo $w={67} $white>
          <input aria-label="speed" defaultValue="1x" />
          <ComboArrow>
            <Icon name="down" size={14} />
          </ComboArrow>
        </Combo>
        <PlayMode>
          <Tools items={['arrow+', 'movie']} w={23} />
        </PlayMode>
        <Sep />
        <Tools items={['camera']} w={23} />
        <Sep />
        <Tool $w={23} $on aria-label="auto key">
          <Icon name="keyPlace" />
        </Tool>
        <Tools items={['keyAdd']} w={23} />
        <Sep />
        <Tools items={['motor', 'spring', 'damper', 'force', 'contact', 'gravity']} w={23} />
        <Sep />
        <Tools items={['plot']} w={23} />
        <Sep />
        <Tools items={['gear']} w={23} />
        <Sep />
        <Tools items={['partGrey', 'partLight', 'partLine+']} w={23} dim />
        <Spacer />
        <Sep />
        <Tools items={['table', 'down']} w={23} />
      </MotionBar>

      <Study>
        <TreePanel>
          <FilterBar>
            <Tool $w={23} $on aria-label="filter">
              <Icon name="funnel" />
            </Tool>
            <Tools items={['filterAnim', 'filterDrive', 'filterSel', 'filterRes']} />
          </FilterBar>
          <TreeBody>
            <VScroll>
              <Icon name="up" size={14} />
              <VThumb />
              <Icon name="down" size={14} />
            </VScroll>
            <Tree>
              {treeRows.map(r => (
                <Row key={r.text} $root={r.root}>
                  <Toggle $open={r.open} $root={r.root} />
                  <NodeLabel $boxed={r.boxed}>
                    <Icon name={r.icon} size={18} />
                    {r.text}
                  </NodeLabel>
                </Row>
              ))}
            </Tree>
          </TreeBody>
          <TreeFoot />
        </TreePanel>
        <Timeline>
          <TimelineChart />
          <ZoomTools>
            <Tools items={['zoomFit', 'zoomIn', 'zoomOut']} w={23} />
          </ZoomTools>
          <HScroll>
            <ScrollButton aria-label="scroll left">
              <Icon name="left" size={14} />
            </ScrollButton>
            <HThumb />
            <Spacer />
            <ScrollButton aria-label="scroll right">
              <Icon name="right" size={14} />
            </ScrollButton>
          </HScroll>
        </Timeline>
      </Study>

      <StudyTabs>
        <TabArrows>
          {Object.entries(tabArrows).map(([name, d]) => (
            <TabArrow key={name} aria-label={name}>
              <svg width="10" height="10" fill="#8e8e8e" stroke="#8e8e8e">
                <path d={d} />
              </svg>
            </TabArrow>
          ))}
        </TabArrows>
        <StudyTab $pad={10}>模型</StudyTab>
        <StudyTab>3D 视图</StudyTab>
        <StudyTab>运动算例 2</StudyTab>
        <StudyTab $active>运动算例 1</StudyTab>
      </StudyTabs>
      <StatusBar>
        <span>SOLIDWORKS Premium 2022 SP5.0</span>
        <StatusRight>
          <StatusText $w={46}>欠定义</StatusText>
          <StatusText $w={161}>在编辑 装配体</StatusText>
          <StatusText $w={42}>自定义</StatusText>
          <StatusText $w={24}>▴</StatusText>
          <Icon name="tag" size={16} />
          <Grip />
        </StatusRight>
      </StatusBar>
    </Window>
  )
}
